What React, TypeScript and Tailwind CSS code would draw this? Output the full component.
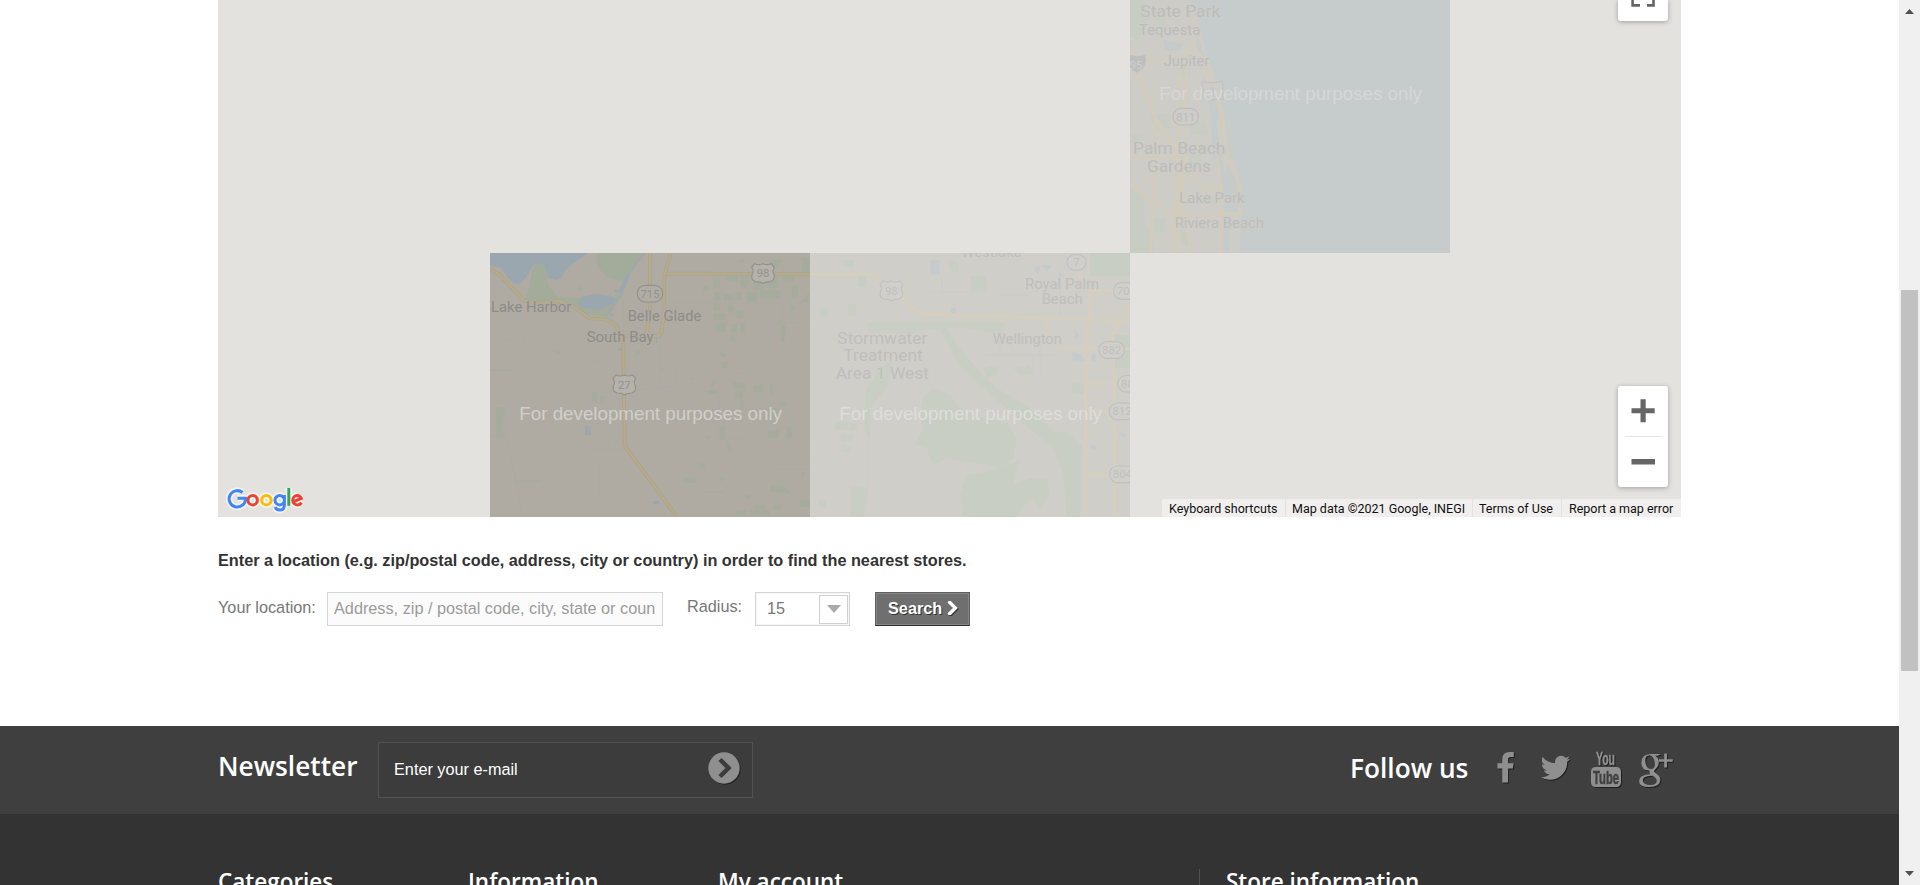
import React from "react";

const sans = "font-['Liberation_Sans',Arial,sans-serif]";
const openSans = "font-['Open_Sans',sans-serif]";

type P = { t: string; x: number; y: number; w: number; s?: number };

function Labels({ items, color, halo }: { items: P[]; color: string; halo: string }) {
  return (
    <g fill={color} stroke={halo} strokeWidth={5} paintOrder="stroke" fontFamily="Roboto, sans-serif">
      {items.map((l) => (
        <text key={l.t} x={l.x - 1} y={l.y - 2} fontSize={l.s ?? 46} textLength={l.w} lengthAdjust="spacingAndGlyphs">
          {l.t}
        </text>
      ))}
    </g>
  );
}

function Badge({ x, y, t, us, fill, line }: { x: number; y: number; t: string; us?: boolean; fill: string; line: string }) {
  return (
    <g transform={`translate(${x} ${y - 1})`}>
      {us ? (
        <path
          d="M-25-29Q-13-23 0-29Q13-23 25-29L34-18Q26-8 33 4Q37 20 22 25Q8 25 0 30Q-8 25-22 25Q-37 20-33 4Q-26-8-34-18Z"
          fill={fill}
          stroke={line}
          strokeWidth={3.5}
        />
      ) : (
        <rect x={-38} y={-25} width={76} height={50} rx={24} fill={fill} stroke={line} strokeWidth={3.5} />
      )}
      <text y={12} textAnchor="middle" fontSize={34} fontFamily="Roboto, sans-serif" fill={line}>
        {t}
      </text>
    </g>
  );
}

function DevText({ y, color }: { y: number; color: string }) {
  return (
    <text x={118} y={y} fontSize={56.5} textLength={788} fill={color} fontFamily="Liberation Sans, Arial, sans-serif">
      For development purposes only
    </text>
  );
}

function JupiterTile() {
  return (
    <svg x={912} y={0} width={320} height={253} viewBox="30 0 960 759">
      <rect x={30} width={960} height={759} fill="#c6cccc" />
      <path d="M30 0H210L240 80L262 170L290 250L322 390L350 500L366 570L362 660L358 759H30Z" fill="#cdccc7" />
      <path
        d="M30 0H65L85 40L75 90L50 120L30 110ZM90 25L130 45L150 100L110 70ZM170 205L210 200V230L180 235ZM85 345L150 340V385L110 390ZM210 370L250 360L265 400L215 405ZM30 405L70 400L60 430L30 425ZM200 470L240 460L250 500L215 510ZM30 560L70 590L75 690L100 680V759H30ZM100 655H136V698H100ZM180 690L205 680V740L185 735ZM240 600L280 590L290 610L245 615ZM310 320L330 400L345 480L330 480Z"
        fill="#c8cdc3"
      />
      <path d="M130 120L190 132L180 152L135 150ZM205 35L240 130L255 190L230 140ZM240 195L280 270L300 330L290 380L305 480L325 560L330 759H310L312 600L280 470L270 330ZM318 490L345 530L355 600V640L325 635Z" fill="#c5cbcb" />
      <g fill="none" stroke="#d3ccba" strokeWidth={8}>
        <path d="M30 145L55 185L55 220L105 350L178 478V759M105 350V470L92 759M180 205L172 460L160 759M200 210L192 470L187 650L210 720V759M75 182H145M218 45L225 125L203 160L200 230M225 145L262 190L285 250L310 350L300 420L330 500L354 540L364 640L280 642L250 652L210 642L160 648L30 555M245 205L265 245M280 260L312 380M30 474H172M195 470L218 525L252 568H305M290 460L305 570L304 759" />
      </g>
      <path d="M245 245Q275 252 307 245L310 268Q304 282 310 298Q275 300 247 296L250 270Z" fill="#cdccc9" stroke="#c0c0be" strokeWidth={3} />
      <text x={278} y={284} textAnchor="middle" fontSize={32} fill="#c1c0bf" fontFamily="Roboto, sans-serif">1</text>
      <path d="M30 165Q52 172 76 165Q84 202 50 218Q36 212 30 200Z" fill="#bdbebe" />
      <text x={29} y={206} fontSize={34} fill="#cfcfcd" fontFamily="Roboto, sans-serif">95</text>
      <Badge x={197} y={351} t="811" fill="#cdccc8" line="#bcbcba" />
      <Labels
        color="#bcbcb9"
        halo="#cdccc8"
        items={[
          { t: "State Park", x: 62, y: 53, w: 240, s: 51 },
          { t: "Tequesta", x: 58, y: 108, w: 184, s: 44 },
          { t: "Jupiter", x: 132, y: 200, w: 137 },
          { t: "Palm Beach", x: 40, y: 465, w: 277, s: 51 },
          { t: "Gardens", x: 82, y: 518, w: 192, s: 51 },
          { t: "Lake Park", x: 179, y: 610, w: 196 },
          { t: "Riviera Beach", x: 165, y: 687, w: 268 },
        ]}
      />
      <DevText y={299} color="#d6d8d7" />
    </svg>
  );
}

function BelleGladeTile() {
  return (
    <svg x={272} y={253} width={320} height={264} viewBox="30 24 960 792">
      <rect x={30} y={24} width={960} height={792} fill="#afaba2" />
      <path
        d="M350 24H495L440 100L420 160L380 215L335 210L270 185L135 165L150 120L155 75Q175 35 198 75L205 120L232 155L292 160L345 145L405 155L430 110L380 95L352 65Z"
        fill="#a3ac9b"
      />
      <path d="M30 24H325L290 48L255 75L245 98L228 106L205 98L192 60Q175 48 158 62L140 95L120 117L100 115L80 95L65 70L30 62Z" fill="#9aa7af" />
      <path d="M292 175Q300 150 350 149Q395 151 407 162Q398 185 350 194Q300 192 292 175Z" fill="#9aa7af" />
      <path d="M440 85L450 90L438 122L425 142L405 142L402 132L418 138ZM388 205L402 210L396 217ZM315 542H323V570H315ZM326 545H333V570H326ZM518 768H538V777H518ZM415 310H425V318H415ZM527 280H532V294H527Z" fill="#9aa7af" />
      <path d="M495 24L440 95L425 150L378 216" fill="none" stroke="#9da8ad" strokeWidth={4} />
      <path
        d="M775 45L800 40L785 55ZM870 45L910 42L890 66L868 60ZM965 40H990V88H965ZM700 98H720V128H700ZM740 92H775V110H740ZM780 88L810 95L800 135L780 120ZM820 110H850V135H820ZM860 95H895V130H860ZM910 92H940V112H910ZM670 120L690 130L668 145ZM700 140H722V168H700ZM730 148H760V166H730ZM765 140H785V165H765ZM800 140H830V170H800ZM840 135H900V160H840ZM935 120H955V160H935ZM960 175L988 140V170ZM700 178H720V198H700ZM740 180L765 185L750 210ZM700 205H735V225H700ZM770 195H790V218H770ZM710 240L740 232L735 262L705 258ZM755 238H772V265H755ZM780 235H795V262H780ZM905 242H920L912 292H902ZM932 180L950 185L930 205ZM750 270H765V290H750ZM225 315L245 322L230 328ZM470 315L485 322L465 335ZM545 365L555 370L542 378ZM715 320L740 325L730 340ZM725 350H742V370H725ZM640 395L645 407L632 402ZM700 405L715 412L690 430ZM760 412H795V430H760ZM820 420H850V440H820ZM870 415H880V445H870ZM685 435H712V447H685ZM765 440H790V458H765ZM780 460L795 470L785 500ZM900 470H920V482H900ZM865 490H895V515H865ZM48 487H75L66 540L72 574H48ZM337 445H353V470H337ZM360 450L375 455L365 480ZM720 545H734V583H720ZM680 568L692 580L678 582ZM742 590L756 605L742 620ZM405 580L415 588L405 595ZM865 555H895V578H865ZM920 545H935V580H920ZM660 655H675V668H660ZM610 698H648V713H610ZM720 695L733 702L720 712ZM965 682L975 680L965 708ZM872 720H905L935 745L870 742ZM960 765H990V785H960ZM790 750L820 752L800 768ZM820 780H855V792H820ZM770 797H795V811H770ZM810 796H868V811H810ZM880 780H905V795H880ZM300 115L308 135L295 132Z"
        fill="#a5ac9d"
      />
      <g fill="none" stroke="#a7a9a6" strokeWidth={2}>
        <path d="M30 374H105M90 442H400L540 430L590 420M60 286H108M46 90V165M30 574H75M85 455L68 535L100 670L128 816M105 707H182M330 352H375M320 616H435M358 645V755M138 260L128 300M545 175H905M430 165V285M540 280V430M600 230L790 330M790 330L895 235L990 230M906 50V228M720 395L715 583H790M765 385H812M800 345L842 402M885 480L935 535M970 585L990 612M675 740H735M890 672H990M585 365V415" />
      </g>
      <path d="M30 72L60 90L130 165L165 175L240 168L280 185L330 220L385 225L408 240L430 290L434 602L590 816M510 24V195L500 265M572 24L553 92V195L545 262L535 273H440M555 85L990 88" fill="none" stroke="#a8a390" strokeWidth={11} />
      <path d="M30 72L60 90L130 165L165 175L240 168L280 185L330 220L385 225L408 240L430 290L434 602L590 816M510 24V195L500 265M572 24L553 92V195L545 262L535 273H440M555 85L990 88" fill="none" stroke="#b8ac87" strokeWidth={6.5} />
      <Badge x={849} y={86} t="98" us fill="#b5b2ab" line="#92918e" />
      <Badge x={433} y={420} t="27" us fill="#b5b2ab" line="#92918e" />
      <Badge x={510} y={147} t="715" fill="#b0ada5" line="#92918e" />
      <Labels
        color="#8d8c89"
        halo="#afaba3"
        items={[
          { t: "Lake Harbor", x: 34, y: 203, w: 241 },
          { t: "Belle Glade", x: 444, y: 229, w: 221 },
          { t: "South Bay", x: 321, y: 292, w: 201 },
        ]}
      />
      <DevText y={524} color="#d1cfca" />
    </svg>
  );
}

function WellingtonTile() {
  return (
    <svg x={592} y={253} width={320} height={264} viewBox="30 24 960 792">
      <rect x={30} y={24} width={960} height={792} fill="#cfcec9" />
      <path
        d="M205 232H615L610 262L650 330L600 262H560L500 250L440 250L480 310L530 370L590 430L660 470L700 500L760 560L800 560L845 600L840 816H800L790 690L760 610L700 560L620 490L540 420L470 350L425 260L380 250L340 265L205 262ZM370 455L400 430L450 450L480 490L530 520L620 530L650 580L640 640L600 670L560 660L500 650L440 640L400 660L380 610L345 600L370 550L360 500ZM500 690L560 680L620 660L655 650L640 720L690 700L740 700L750 750L720 790L690 760L650 816H490L480 750ZM195 440L240 370L280 340L260 430L210 490V580L195 560ZM155 725L205 730L190 816H150ZM130 45H160V65H130ZM172 88L200 90L200 125L175 125ZM512 92H560V137H512ZM870 24H990V93H870ZM445 45L475 50V85L450 75ZM105 530H145V556H105ZM150 535H170V555H150ZM122 570H158V590H122ZM125 600L155 605L150 622L122 620ZM55 765L75 763L78 785L55 783ZM815 415H850V447H815ZM945 270H990V370H945ZM60 190H85V215H60ZM145 178H168V212H145ZM550 370L600 360L590 390L560 400ZM640 370L690 360L700 390L660 390Z"
        fill="#c9cec4"
      />
      <path
        d="M391 45H419V89H391ZM453 188H469V204H453ZM815 320L838 325L855 347L818 347ZM875 325L890 330L885 350L872 345ZM700 70L720 62L715 90ZM725 60L755 62L740 78ZM775 80L790 90L780 100ZM822 255L836 268L828 282ZM870 600L890 605L888 613L870 610ZM955 560L980 570L970 580Z"
        fill="#c5cbcd"
      />
      <path d="M207 400L203 725M426 90V145M395 140H550M595 150H690M780 130V210M700 330V400M560 330H760M720 270V390M600 230V330" fill="none" stroke="#cacbc8" strokeWidth={2.5} />
      <path
        d="M30 88H215L240 105M300 155L325 180L370 207L990 228M868 220V137H945M865 220L856 440V816M740 222V250L748 270M765 300L785 312H990M990 185L955 235L940 270V370L944 470V816M860 416H945M860 498H930M860 690H930M825 88L848 102"
        fill="none"
        stroke="#d6cfbd"
        strokeWidth={8.5}
      />
      <Badge x={274} y={138} t="98" us fill="#d0cfcb" line="#c0c0be" />
      <svg x={799} y={19} width={61} height={66} viewBox="-31 -33 62 66">
        <rect x={-29} y={-24} width={58} height={48} rx={24} fill="#d0cfcb" stroke="#c0c0be" strokeWidth={3.5} />
        <text y={11} textAnchor="middle" fontSize={33} fill="#bcbcba" fontFamily="Roboto, sans-serif">7</text>
      </svg>
      <Badge x={979} y={139} t="704" fill="#d0cfcb" line="#c0c0be" />
      <Badge x={935} y={316} t="882" fill="#d0cfcb" line="#c0c0be" />
      <Badge x={992} y={417} t="802" fill="#d0cfcb" line="#c0c0be" />
      <Badge x={966} y={500} t="812" fill="#d0cfcb" line="#c0c0be" />
      <Badge x={967} y={689} t="804" fill="#d0cfcb" line="#c0c0be" />
      <Labels
        color="#bfbebc"
        halo="#cfcec9"
        items={[
          { t: "Westlake", x: 485, y: 38, w: 180 },
          { t: "Royal Palm", x: 676, y: 134, w: 222 },
          { t: "Beach", x: 726, y: 179, w: 123 },
          { t: "Wellington", x: 579, y: 299, w: 208 },
          { t: "Stormwater", x: 113, y: 299, w: 270, s: 51 },
          { t: "Treatment", x: 131, y: 351, w: 238, s: 51 },
          { t: "Area 1 West", x: 108, y: 404, w: 280, s: 51 },
        ]}
      />
      <DevText y={524} color="#dededb" />
    </svg>
  );
}

function GoogleLogo() {
  return (
    <svg className="absolute bottom-[2px] left-[7px] h-[32px] w-[85px]" viewBox="6 -4 84 32" fill="none">
      <g stroke="#f4f3f1" strokeWidth="6.5">
        <path d="M31 5.5A8.2 8.2 0 1 0 34 11.3H26" transform="translate(-8 0)" />
        <circle cx="33.2" cy="13.2" r="4.7" />
        <circle cx="46.9" cy="13.2" r="4.7" />
        <path d="M64.9 8V18.5Q64.6 23 60.3 23Q57 23 55.6 20.2M69.3 1V18.8M77.6 8.5A4.4 4.7 0 0 0 77.7 17.9L82 14" />
        <circle cx="60.2" cy="13.2" r="4.7" />
      </g>
      <g strokeWidth="3">
        <path d="M31 5.5A8.2 8.2 0 1 0 34 11.3H26" transform="translate(-8 0)" stroke="#4285f4" />
        <circle cx="33.2" cy="13.2" r="4.7" stroke="#ea4335" />
        <circle cx="46.9" cy="13.2" r="4.7" stroke="#fbbc05" />
        <path d="M64.9 8V18.5Q64.6 23 60.3 23Q57 23 55.6 20.2M64.9 13.2A4.7 4.7 0 1 0 55.5 13.2A4.7 4.7 0 1 0 64.9 13.2" stroke="#4285f4" />
        <path d="M69.3 1V18.8" stroke="#34a853" />
        <path d="M73.6 14.8L81.7 11.4Q80.5 8.5 77.6 8.5A4.4 4.7 0 0 0 77.7 17.9Q80.6 17.9 82 15.6" stroke="#ea4335" />
      </g>
    </svg>
  );
}

function StoreMap() {
  return (
    <div className="relative h-[517px] w-[1463px] overflow-hidden bg-[#e3e2de]">
      <svg width={1463} height={517} className="block">
        <JupiterTile />
        <BelleGladeTile />
        <WellingtonTile />
      </svg>
      <div className="absolute top-0 right-[13px] h-[21px] w-[50px] rounded-b-[3px] bg-white shadow-[0_1px_5px_rgba(0,0,0,0.3)]">
        <svg width="50" height="21" fill="none" stroke="#666" strokeWidth="2.6">
          <path d="M14.6 0V5.4H22M35.5 0V5.4H29" />
        </svg>
      </div>
      <div className="absolute top-[386px] right-[13px] h-[101px] w-[50px] rounded-[3px] bg-white shadow-[0_1px_5px_rgba(0,0,0,0.3)]">
        <svg width="50" height="101">
          <path d="M13.5 22.2h9v-9h5.2v9h9v5h-9v9h-5.2v-9h-9zM13.5 73h23.500v5.400h-23.500z" fill="#666" />
          <path d="M7 50.5h37" stroke="#e6e6e6" />
        </svg>
      </div>
      <GoogleLogo />
      <div className="absolute right-0 bottom-0 flex h-[18px] gap-px font-[Roboto,sans-serif] text-[12.5px] leading-[20px] whitespace-nowrap text-[#111]">
        <span className="w-[123px] bg-[#f0efed] pl-[7px]">Keyboard shortcuts</span>
        <span className="w-[186px] bg-[#f0efed] pl-[6px]">Map data ©2021 Google, INEGI</span>
        <span className="w-[88px] bg-[#f0efed] pl-[6px]">Terms of Use</span>
        <span className="w-[119px] bg-[#f0efed] pl-[7px]">Report a map error</span>
      </div>
    </div>
  );
}

function SearchForm() {
  return (
    <div className={`${sans} text-[16.25px] text-[#777]`}>
      <p className="mt-[32px] h-[22px] text-[16.25px] leading-[23px] font-bold text-[#333]">
        Enter a location (e.g. zip/postal code, address, city or country) in order to find the nearest stores.
      </p>
      <div className="mt-[21px] flex h-[34px] whitespace-nowrap">
        <span className="w-[109px] leading-[31px]">Your location:</span>
        <div className="w-[336px] border border-[#d6d4d4] bg-[#fbfbfb] px-[6px]">
          <div className="overflow-hidden leading-[30px] text-[#9c9b9b]">
            Address, zip / postal code, city, state or coun
          </div>
        </div>
        <span className="ml-[24px] w-[68px] leading-[29px]">Radius:</span>
        <div className="flex w-[95px] justify-between border border-[#d6d4d4] bg-white pl-[11px] leading-[31px] shadow-[inset_0_0_0_1px_#f6f6f6]">
          <span>15</span>
          <span className="mt-[2px] mr-px flex h-[29px] w-[29px] items-center justify-center border border-[#d0d0d0] bg-white">
            <svg width="14" height="8" className="-mt-[2px]">
              <path d="M0 0h14L7 8z" fill="#aaa" />
            </svg>
          </span>
        </div>
        <div className="ml-[25px] flex w-[95px] items-start border border-[#5f5f5f] border-b-[#2f2f2f] bg-[#6f6f6f] pl-[12px] font-bold text-white shadow-[inset_0_0_0_1px_#868686] [text-shadow:1px_1px_0_#333]">
          <span className="leading-[30px]">Search</span>
          <svg width="11" height="14" viewBox="320 100 1070 1460" className="mt-[8px] ml-[5px] drop-shadow-[1px_1px_0_#333]">
            <path d="M1363 877l-742 742q-19 19-45 19t-45-19l-166-166q-19-19-19-45t19-45l531-531-531-531q-19-19-19-45t19-45l166-166q19-19 45-19t45 19l742 742q19 19 19 45t-19 45z" fill="#fff" />
          </svg>
        </div>
      </div>
    </div>
  );
}

function Social() {
  return (
    <svg width="184" height="44" viewBox="0 0 184 44" className="drop-shadow-[1px_1px_0_rgba(0,0,0,0.5)]" fill="#908f8f">
      <path transform="translate(-8.600 3.900) scale(.0189 .01845)" d="M1343 12v264h-157q-86 0-116 36t-30 108v189h293l-39 296h-254v759h-306v-759h-255v-296h255v-218q0-186 104-288.500t277-102.500q147 0 228 12z" />
      <path transform="translate(41.600 3) scale(.01875)" d="M1684 408q-67 98-162 167 1 14 1 42 0 130-38 259.500t-115.500 248.500-184.500 210.500-258 146-323 54.500q-271 0-496-145 35 4 78 4 225 0 401-138-105-2-188-64.500t-114-159.500q33 5 61 5 43 0 85-11-112-23-185.500-111.500t-73.500-205.500v-4q68 38 146 41-66-44-105-115t-39-154q0-88 44-163 121 149 294.500 238.500t371.500 99.500q-8-38-8-74 0-134 94.500-228.500t228.500-94.500q140 0 236 102 109-21 205-78-37 115-142 178 93-10 186-50z" />
      <g fontFamily="Liberation Sans Narrow, Liberation Sans, Arial, sans-serif">
        <text x="99" y="17" fontSize="18" textLength="19" lengthAdjust="spacingAndGlyphs" stroke="#908f8f" strokeWidth=".4">You</text>
        <rect x="94" y="19" width="30" height="20" rx="4.500" />
        <text x="96" y="35.500" fontSize="17.500" textLength="26" lengthAdjust="spacingAndGlyphs" fill="#3f3f3f" stroke="#3f3f3f" strokeWidth=".5">Tube</text>
      </g>
      <path
        transform="translate(.8 0)"
        fillRule="evenodd"
        d="M152.500 6H163L160 7.800H157.300Q161 10 161 14.700Q161 18.300 157.800 21Q155.800 22.600 156.500 23.800Q157 24.600 159 26Q162.500 28.400 162.500 31.700Q162.500 39 151.500 39Q141.300 39 141.300 33Q141.300 26.700 152.500 26.300Q151 24.500 152 22.500Q144 23 143.500 15Q143.500 6.500 152.500 6ZM151.500 7.300Q147.300 7.600 147.400 12.500Q148.200 20.800 153 21Q157.300 20.700 157.200 16Q156.500 7.700 151.500 7.300ZM153.500 27.700Q145 28 145 32.200Q145.200 37 152.500 37Q159 37 159 32.500Q159 30.200 154.800 27.700Z"
      />
      <path transform="translate(1 0)" d="M166.200 5.500h2.800v5.700h5.700v2.600h-5.700v5.700h-2.800v-5.700h-5.500v-2.600h5.500z" />
    </svg>
  );
}

function Footer() {
  return (
    <footer className={`${openSans} bg-[#333] font-semibold text-white`}>
      <div className="flex h-[88px] bg-[#3f3f3f] pl-[218px]">
        <h4 className="w-[160px] pt-[22px] text-[26.25px] leading-[36px]">Newsletter</h4>
        <div className={`${sans} mt-[16px] flex h-[56px] w-[375px] justify-between border border-[#515151] bg-[#3c3c3c] pr-[11px] pl-[15px] font-normal`}>
          <span className="text-[16.25px] leading-[52px]">Enter your e-mail</span>
          <svg width="34" height="34" className="mt-[8px] drop-shadow-[1px_1px_0_#222]">
            <circle cx="17" cy="17" r="15.700" fill="#908f8f" />
            <path d="M13 8.500L21.500 17L13 25.500" fill="none" stroke="#3c3c3c" strokeWidth="4.500" />
          </svg>
        </div>
        <div className="ml-[597px] flex">
          <h4 className="w-[147px] pt-[24px] text-[26.25px] leading-[36px] whitespace-nowrap">Follow us</h4>
          <div className="pt-[22px]">
            <Social />
          </div>
        </div>
      </div>
      <div className="flex h-[71px] overflow-hidden pl-[218px] text-[22.5px] leading-[30px] whitespace-nowrap">
        <h4 className="w-[250px] pt-[53px]">Categories</h4>
        <h4 className="w-[250px] pt-[53px]">Information</h4>
        <h4 className="w-[481px] pt-[53px]">My account</h4>
        <div className="mt-[55px] border-l border-[#515151] pl-[26px]">
          <h4 className="-mt-[2px]">Store information</h4>
        </div>
      </div>
    </footer>
  );
}

function Scrollbar() {
  return (
    <div className="flex h-[885px] w-[21px] flex-col items-center justify-between bg-[#f0f0f0]">
      <svg width="21" height="20">
        <path d="M6 14L10.500 9L15 14z" fill="#505050" />
      </svg>
      <div className="mt-[270px] mb-auto h-[381px] w-[17px] bg-[#c1c1c1] h-[381px]" />
      <svg width="21" height="20">
        <path d="M6 6L10.500 11L15 6z" fill="#505050" />
      </svg>
    </div>
  );
}

export default function App() {
  return (
    <div className="flex h-[885px] w-[1920px] overflow-hidden bg-white">
      <div className="w-[1899px]">
        <main className="h-[726px] pl-[218px]">
          <StoreMap />
          <SearchForm />
        </main>
        <Footer />
      </div>
      <Scrollbar />
    </div>
  );
}
